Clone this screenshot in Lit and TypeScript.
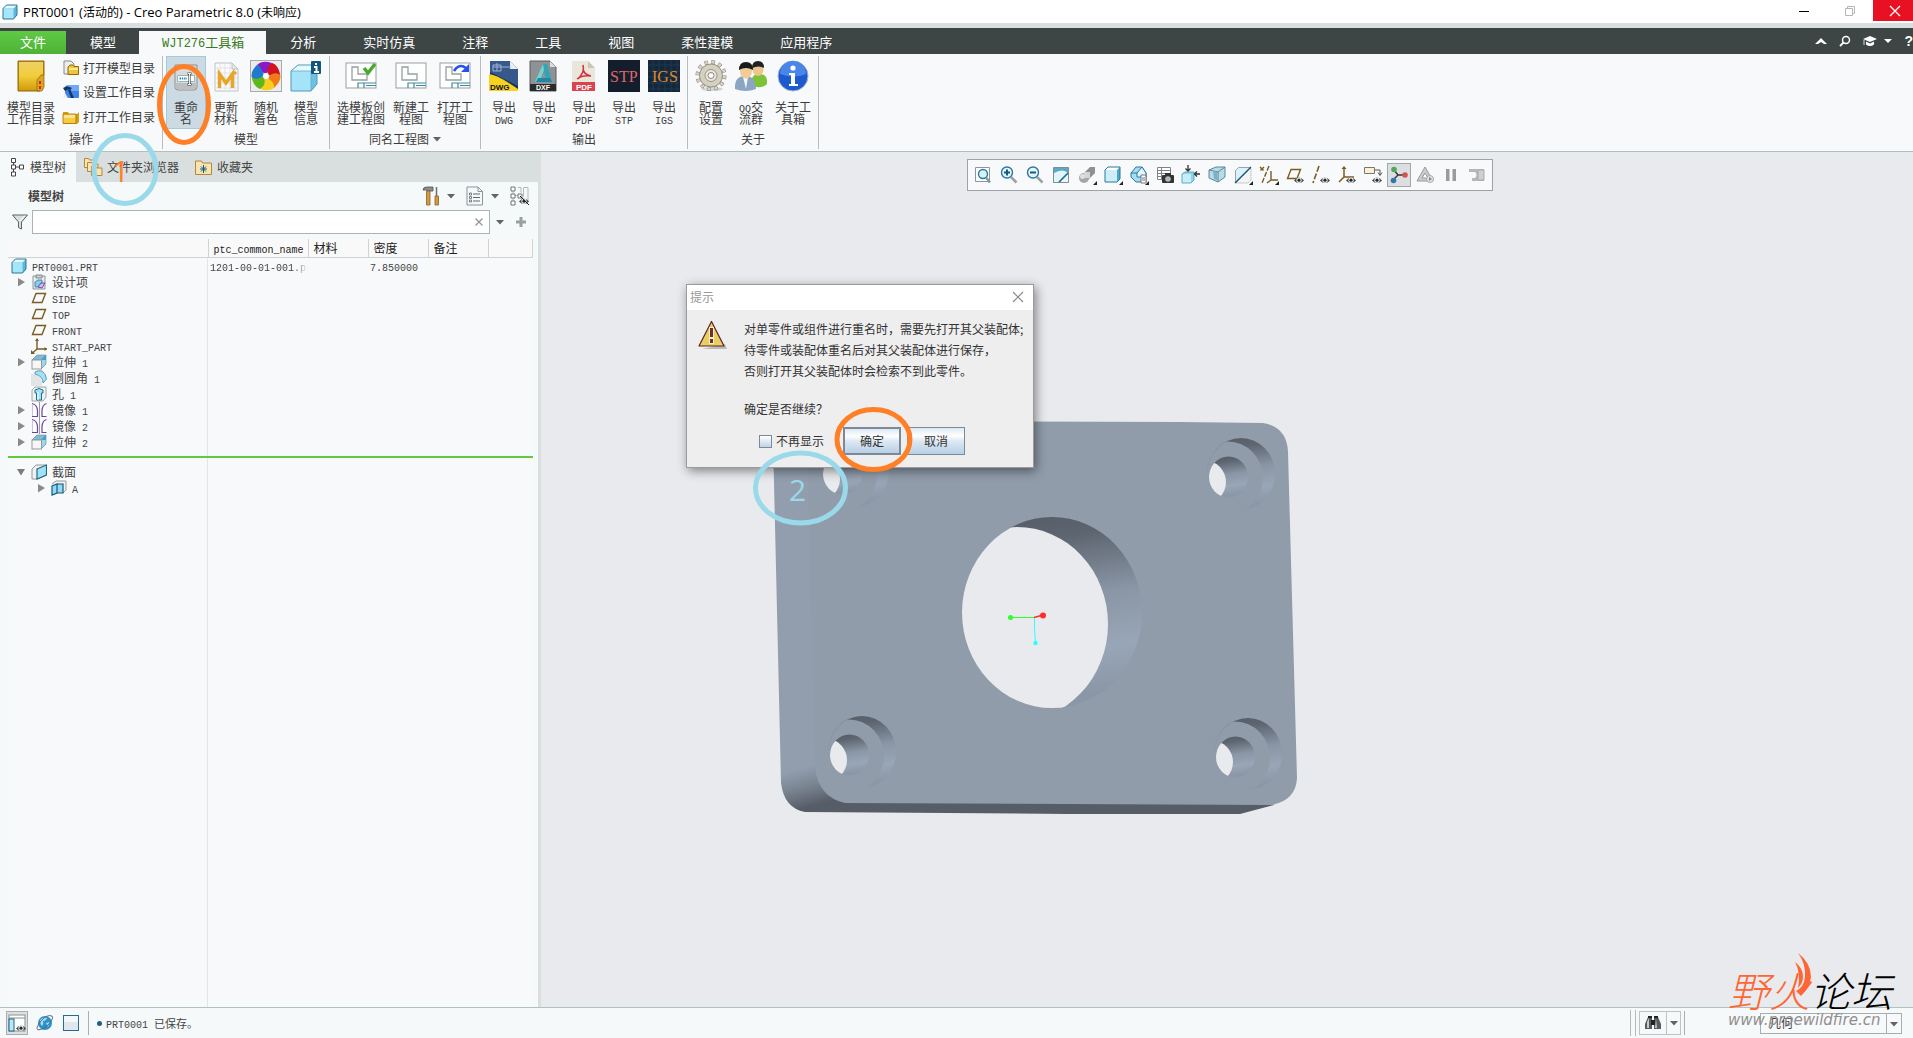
import { LitElement, html, svg, css, nothing, TemplateResult } from "lit";
import { customElement, property } from "lit/decorators.js";
import { classMap } from "lit/directives/class-map.js";

type Art = [w: number, h: number, body: TemplateResult];

const tick = svg`<path d="M20 16v4h-4z" fill="#222"/>`;
const eye = (x: number, y: number) => svg`<g transform="translate(${x} ${y})">
  <path d="M0 3.500Q5 -2.500 10 3.500Q5 8.500 0 3.500z" fill="#3f4446"/><circle cx="5" cy="3.200" r="2.600" fill="#f4f6f7"/><circle cx="5" cy="3.200" r="1.600" fill="#24282a"/></g>`;
const cubeArt = svg`<path d="M1 4.500L4.500 1H15v10L11.500 15H1z" fill="#5fb7d6"/><path d="M1 4.500L4.500 1H15L11.500 4.500z" fill="#e4f7fd"/>
  <path d="M1 4.500h10.500V15H1z" fill="#a5e6fa"/><path d="M1 4.500L4.500 1H15v10L11.500 15H1z" fill="none" stroke="#2a7896"/>`;
const sheet = svg`<rect x="1" y="3" width="30" height="25" fill="#fdfefe" stroke="#9a9fa0"/>
  <path d="M7 7h6v7h9v6H7z" fill="none" stroke="#9a9fa0" stroke-width="1.300"/>
  <path d="M13 28v-5h18M19 23v5M21 25.500h10" fill="none" stroke="#3f8ba1" stroke-width="1.200"/>`;
const extrude = svg`<path d="M1 6L6 1h9v9l-5 5z" fill="#4fa3c6"/><path d="M1 6L6 1h9l-5 5z" fill="#79bdd8" stroke="#7b8d94" stroke-width=".6"/>
  <path d="M15 1v9l-5 5V6z" fill="#9ad8ee" stroke="#5d8798" stroke-width=".6"/><path d="M10.500 6L15 1v5z" fill="#4b9fc2"/><rect x="1" y="6" width="9.500" height="9" fill="#f7f7f7" stroke="#999"/>`;
const mirror = svg`<path d="M8.500 0v16" stroke="#9a9a9a"/><path d="M1 1.500q5 1 5.500 7v6H1M15.500 1.500q-4 1-4.500 7v6h4.500" fill="#fdfcff" stroke="#6a459b" stroke-width="1.200"/><path d="M1.500 2v12" stroke="#ccc4e0"/>`;
const plane = svg`<path d="M5 3.500h9.500L11 12.500H1.500z" fill="none" stroke="#7a5c20" stroke-width="1.400"/>`;
const folder = svg`<path d="M1 4h5l1 2h8l2-2v10l-2 2H1z" fill="#d79f12"/><path d="M1 6h13v9.500H1z" fill="#f4cb45" stroke="#a37308" stroke-width=".8"/><path d="M2 7h11v3H2z" fill="#fbe48d"/>`;
const fbFolder = (x: number, y: number) => svg`<path transform="translate(${x} ${y})" d="M.5 1.500h4l1 1.500h5.500v7.500H.5z" fill="#f9e3b0" stroke="#b3863e"/>`;

const ART: Record<string, Art> = {
  cube: [16, 16, cubeArt],
  modelDir: [32, 32, svg`<path d="M3 1h26v14l-4 4v12H3z" fill="#c98c08"/><path d="M4 2h24v12l-4 4v12H4z" fill="url(#gold)"/>
    <path d="M22 31V20l4-5h3v12l-2 4z" fill="#dba51d" stroke="#96700e" stroke-width=".8"/><path d="M25 21v3M25 26v3" stroke="#e51d12" stroke-width="2"/>
    <path d="M3 1h26v14M3 1v30h22" fill="none" stroke="#8c6a12"/>
    <defs><linearGradient id="gold" x1="0" y1="0" x2="0" y2="1"><stop offset="0" stop-color="#eecf65"/><stop offset=".5" stop-color="#f2cd3a"/><stop offset="1" stop-color="#d39c0b"/></linearGradient></defs>`],
  openModel: [16, 16, svg`<path d="M1 1h7l3 3v10H1z" fill="#eee" stroke="#888"/><path d="M5 7l2-2h3l1 1.500h4.500v8H5z" fill="#f0c53c" stroke="#8e6909"/><path d="M6 8h9v2H6z" fill="#fbe891"/>`],
  setDir: [16, 16, svg`<rect x="2" y="2" width="14" height="12" rx="1" fill="#3f83e8"/><path d="M3 1h13v6H9z" fill="#6ea8f6"/><path d="M0 4q4-3 9 0l-2 2-1-1-4 2zM5 6l2-1 4 9H8z" fill="#16365f"/><path d="M2 9l3 5H0z" fill="#e8f0fb"/>`],
  openDir: [18, 17, folder],
  rename: [32, 32, svg`<path d="M5 5h22v22q0 3-3 3H8q-3 0-3-3z" fill="#d9dadb" stroke="#8f8f8f"/><path d="M5.500 23h21v4q0 2.500-3 2.500H8.500q-3 0-3-2.500z" fill="#bcbfc1"/><path d="M7.500 15.500h17v6h-17z" fill="#fff" stroke="#8fb9c4"/>
    <path d="M9.500 18.500h7.500" stroke="#3d87a5" stroke-width="2" stroke-dasharray="1.500 .8"/><path d="M17.500 13.500h4M17.500 24.500h4M19.500 13.500v11" stroke="#444" stroke-width="2.200"/><path d="M18 13.500h3M18 24.500h3M19.500 13.500v11" stroke="#fff" stroke-width=".9"/>`],
  update: [32, 32, svg`<path d="M5 3h17l6 6v22H5z" fill="#fbfbfb" stroke="#bcc2c6"/><path d="M5 8h22M5 13h23M5 18h23M5 23h23M5 28h23M10 3v28M15 3v28M20 3v28M25 7v24" stroke="#d9dfe2" stroke-width=".8"/>
    <path d="M22 3v6h6z" fill="#e4e8ea" stroke="#bcc2c6"/><path d="M9.500 28V14l6.500 9 6.500-9v14" fill="none" stroke="#e8a52b" stroke-width="3.500"/><circle cx="25" cy="13" r="1.800" fill="#e8a52b"/>`],
  random: [32, 32, svg`<rect x=".5" y=".5" width="31" height="31" fill="#ececec" stroke="#aaa"/>
    ${["#8a1bc4", "#d21320", "#f27a18", "#f6cf22", "#5cb81d", "#1f79cf"].map((c, i) => svg`<path transform="rotate(${i * 60} 16 16)" d="M16 14Q7 11 8 4Q13 0 22 3Q20 9 16 14z" fill=${c}/>`)}
    <circle cx="16" cy="16" r="3" fill="#fff"/>`],
  info: [32, 32, svg`<path d="M1 11l7-6h19v19l-6 7H1z" fill="#6fc0de"/><path d="M1 11l7-6h19l-6 6z" fill="#e8f8fd"/><path d="M1 11h20v20H1z" fill="#a5e3f8"/><path d="M1 11l7-6h19v19l-6 7H1z" fill="none" stroke="#4a9dbb"/>
    <path d="M1 11h20v20" fill="none" stroke="#5aaecb" stroke-width=".8"/><rect x="21" y="1" width="10" height="13" rx="1" fill="#12577a"/><path d="M26 3v2M24 7h2.500v5M24 12h5" stroke="#fff" stroke-width="2" fill="none"/>`],
  sheetNew: [32, 32, sheet],
  sheetTpl: [32, 32, svg`${sheet}<path d="M19 8l4 5 7-9" fill="none" stroke="#4aa82c" stroke-width="3.500"/>`],
  sheetOpen: [32, 32, svg`${sheet}<path d="M15 11q5-8 12-3" fill="none" stroke="#2850ec" stroke-width="2.500"/><path d="M30 4v8h-8z" fill="#2850ec"/>`],
  dwg: [32, 32, svg`<path d="M2 1h20l8 8v22H2z" fill="#36588b"/><path d="M2 12L30 26v5H2z" fill="#173257"/><path d="M1 14q9 1 29 15v2H1z" fill="#f8d21c"/><path d="M22 1v8h8z" fill="#e9eef5"/>
    <path d="M5 7h18M9 3v8M5 5h8v6H5z" fill="none" stroke="#9bb4d8"/><text x="2" y="30" font-family="Liberation Sans" font-size="8" font-weight="700" fill="#111">DWG</text>`],
  dxf: [32, 32, svg`<path d="M2 1h20l6 6v24H2z" fill="#8f9294" stroke="#5a5c5e"/><path d="M22 1v6h6z" fill="#dadcdd"/><path d="M7 22L15 4h4l5 18h-5l-3-11-4 11z" fill="#34a4b4"/><path d="M7 22l5-1 4-11-1-6z" fill="#79d3ca"/><path d="M10 18h12l2 4H8z" fill="#1f86a6"/>
    <path d="M2 24h26v7H2z" fill="#2a2b2c"/><text x="8" y="30" font-family="Liberation Sans" font-size="7" font-weight="700" fill="#fff">DXF</text>`],
  pdf: [32, 32, svg`<path d="M4 1h16l7 7v23H4z" fill="#e9e7dc"/><path d="M20 1v7h7z" fill="#c9c6b8"/><path d="M15 5q2 7-5 14M15 9q1 6 8 7-9-1-14 3" fill="none" stroke="#d4333d" stroke-width="1.600"/><path d="M4 22h23v9H4z" fill="#d8434d"/>
    <text x="8" y="30" font-family="Liberation Sans" font-size="8" font-weight="700" fill="#fff">PDF</text>`],
  stp: [32, 32, svg`<rect width="32" height="32" fill="#131d2b"/><text x="2" y="22" font-family="Liberation Serif" font-size="16" fill="#e0666a">STP</text>`],
  igs: [32, 32, svg`<rect width="32" height="32" fill="#15273a"/><path d="M0 5h32M0 11h32M0 17h32M0 23h32M0 29h32M5 0v32M11 0v32M17 0v32M23 0v32M29 0v32" stroke="#1f3c56" stroke-width=".8"/><text x="4" y="22" font-family="Liberation Serif" font-size="16" fill="#e08a25">IGS</text>`],
  gear: [32, 32, svg`<ellipse cx="17" cy="29" rx="11" ry="2" fill="#d5d5d5"/><circle cx="16" cy="15.500" r="13.500" fill="none" stroke="#8d8878" stroke-width="4" stroke-dasharray="3.500 3.568"/><circle cx="16" cy="15.500" r="13.500" fill="none" stroke="#d8d4c6" stroke-width="3" stroke-dasharray="2.500 4.568" stroke-dashoffset="-.5"/>
    <circle cx="16" cy="15.500" r="11.500" fill="#d5d1c2" stroke="#97917f"/><circle cx="16" cy="15.500" r="6" fill="#e9e6dc" stroke="#9b9584"/><circle cx="16" cy="15.500" r="3" fill="#fff" stroke="#8c8675"/>`],
  people: [32, 32, svg`<path d="M16 26q-1-12 8-12t8 10q-4 5-16 2z" fill="#7cc436"/><ellipse cx="23" cy="9" rx="5.500" ry="7" fill="#eec48d"/><path d="M17 8q0-7 6-7t6 7q-5-3-12 0z" fill="#222"/>
    <path d="M0 29q-1-13 10-13t11 13q-10 4-21 0z" fill="#8ca5c0"/><path d="M8 17l3 12 2-12z" fill="#f3f6fa"/><ellipse cx="11" cy="11" rx="6" ry="7.500" fill="#f3cb96"/><path d="M4 10q0-8 7-8t7 8q-7-4-14 0z" fill="#191919"/>`],
  about: [32, 32, svg`<circle cx="16" cy="16" r="15" fill="#1d59cf" stroke="#9db3d4"/><path d="M3 14a13 13 0 0 1 26 0q-12 5-26 0z" fill="#4a86ea"/><circle cx="16" cy="8" r="2.600" fill="#fff"/><path d="M12 13h6v11h3v2h-9v-2h2v-9h-2z" fill="#fff"/>`],
  treeTab: [16, 20, svg`<path d="M3.500 5v10M4 10h6" stroke="#444" fill="none"/><path d="M1.500 1.500h4v4h-4zM1.500 8h4v4h-4zM1.500 15h4v4h-4zM9.500 8h4v4h-4z" fill="#fff" stroke="#444"/>`],
  folders: [19, 20, svg`${fbFolder(0, 0)}${fbFolder(3, 4)}${fbFolder(7, 8)}`],
  favs: [18, 16, svg`<path d="M.5 2h6l1 2h9v11.500H.5z" fill="#f9e3b0" stroke="#b3863e"/><path d="M8.500 6v8M5 10h7M6 7.500l5 5M11 7.500l-5 5" stroke="#1c5c7c"/>`],
  tools: [18, 20, svg`<path d="M1 4q0-3 4-3h6v4H8L4 4z" fill="#8a8f92" stroke="#4d5052" stroke-width=".8"/><path d="M4.500 5h3.500v14H4.500z" fill="#d19a4a" stroke="#8d5f1d" stroke-width=".8"/><path d="M14.500 1v9" stroke="#6d7173" stroke-width="1.500"/><path d="M13 10h3.500v9H13z" fill="#d19a4a" stroke="#8d5f1d" stroke-width=".8"/>`],
  list: [18, 20, svg`<path d="M1 1h11l4.500 4.500V19H1z" fill="#f4f8f9" stroke="#87979c"/><path d="M12 1v4.500h4.500" fill="none" stroke="#87979c"/><path d="M7 8h7M7 11.500h7M7 15h7" stroke="#5d6a6e"/><path d="M3.500 7h2v2h-2zM3.500 10.500h2v2h-2zM3.500 14h2v2h-2z" fill="none" stroke="#5d6a6e" stroke-width=".8"/>`],
  treeEye: [20, 20, svg`<path d="M3 5v10M4 9.500h6M8 1.500h3v5M14 1.500h4v14M13.500 1.500v9" stroke="#b3babc" fill="none"/><path d="M1 1h4v4H1zM1 8h4v4H1zM1 15h4v4H1zM8 8h4v4H8z" fill="#fff" stroke="#6f7779"/>${eye(9, 12)}<path d="M10 10l9 9" stroke="#222"/>`],
  funnel: [16, 16, svg`<path d="M.5 1h15L9.500 8v7l-3-1.500V8z" fill="#d9dfe0" stroke="#5c6466"/><path d="M8 7l5-5.500" stroke="#fff"/>`],
  cross: [10, 10, svg`<path d="M1.500 1.500l7 7M8.500 1.500l-7 7" stroke="#8e9698" stroke-width="1.200"/>`],
  plus: [12, 12, svg`<path d="M6 1v10M1 6h10" stroke="#9a9fa1" stroke-width="3"/>`],
  down: [8, 8, svg`<path d="M0 2h8L4 6.500z" fill="#5f6466"/>`],
  right: [8, 10, svg`<path d="M1 1l7 4-7 4.500z" fill="#8a8a8a"/>`],
  open: [10, 8, svg`<path d="M1 1h8L5 7.500z" fill="#7c7c7c"/>`],
  design: [16, 16, svg`<path d="M2 2h12v13H2z" fill="#e8ecef" stroke="#8c9499"/><path d="M5 1h6v3H5z" fill="#c9ced1" stroke="#82898d"/><path d="M4 8l3-2h4v4l-2 3H4z" fill="#82cfe8" stroke="#30799a" stroke-width=".8"/><path d="M7 13l3-4h4l-3 5z" fill="#cdbce8" stroke="#6f4aa8"/>`],
  plane: [16, 16, plane],
  csys: [16, 16, svg`<path d="M6 1v10h10M6 11l-4.500 4" fill="none" stroke="#7a5c20" stroke-width="1.400"/><path d="M4 3l2-3 2 3zM13.500 9l2.500 2-2.500 2zM0 12v4h4z" fill="#7a5c20"/>`],
  extrude: [16, 16, extrude],
  round: [16, 16, svg`<path d="M0 4h4q7 2 7 12H0z" fill="#e3e4e5"/><path d="M4 2q3-2 7-1 4 3 4.500 8L12 13q0-7-8-9z" fill="#a6e0f4" stroke="#3b8cab" stroke-width=".8"/>`],
  hole: [16, 16, svg`<path d="M1 4l3-3h11v10l-3 4H1z" fill="#f0f1f1" stroke="#8d9496" stroke-width=".8"/><path d="M4 4q4-3 8 0v3h-1.500v7h-5V7H4z" fill="#a3e2f5" stroke="#21708f"/><path d="M7 6v8" stroke="#fff"/>`],
  mirror: [16, 16, mirror],
  section: [16, 16, svg`<path d="M1 5l4-4h10v10l-9 4H1z" fill="#f0f0f0" stroke="#999"/><path d="M6 5l9.500-4v10L6 15z" fill="#a3e2f5" stroke="#1d6b8a" stroke-width="1.200"/>`],
  sectionA: [16, 16, svg`<path d="M1 4l4-3h10v9l-3 3" fill="#f0f0f0" stroke="#999"/><path d="M1 6l5-2v9l-5 2zM6 4h6v9H6z" fill="#93dbf2" stroke="#14597a" stroke-width="1.200"/>`],
  navPane: [18, 18, svg`<rect x="1" y="1" width="16" height="16" fill="#fff" stroke="#8a9092"/><path d="M1 4h16" stroke="#8a9092"/><rect x="1" y="5" width="5" height="12" fill="#bfe6f4" stroke="#1d6483"/>${eye(8, 11)}`],
  globe: [18, 18, svg`<circle cx="9" cy="9" r="7" fill="#2b93cc"/><path d="M4 6q4-4 7-2-1 3-4 3 1 3-1 5-2-2-2-6zM10 9l4-1-2 5z" fill="#a9dcf2"/><path d="M2 16Q-1 14 5 7T16 2q2 2-3 8T2 16z" fill="none" stroke="#51606a" stroke-width=".9"/>`],
  square: [18, 18, svg`<rect x="1.500" y="1.500" width="15" height="15" fill="#dfe8ee" stroke="#2a6b89"/><path d="M2 2h14v6H2z" fill="#f3f7f9"/>`],
  bino: [18, 18, svg`<path d="M4 3h4v12H1v-5zM10 3h4l3 7v5h-7z" fill="#555b5e"/><path d="M7 6h4v5H7z" fill="#222"/><path d="M3 8l2-4v10H3zM12 5l1 9h-2z" fill="#c5cacc"/><path d="M4 2h4v2H4zM10 2h4v2h-4z" fill="#222"/>`],
  warn: [32, 32, svg`<path d="M5 30h25l-2-5z" fill="#bbb"/><path d="M14.500 2.500L27 27H2z" fill="#e8cf5f" stroke="#5f1f2a" stroke-width="1.200" stroke-linejoin="round"/><path d="M12 8h5v17h-5z" fill="#fdf3b8"/><path d="M13 9h3v9h-3zM13 20h3v4h-3z" fill="#742b3a"/>`],
  close: [12, 12, svg`<path d="M1 1l10 10M11 1L1 11" stroke="#8a8a8a" stroke-width="1.200"/>`],
  winMin: [12, 12, svg`<path d="M1 6.500h10" stroke="#000"/>`],
  winMax: [12, 12, svg`<path d="M1.500 3.500h7v7h-7zM3.500 3.500v-2h7v7h-2" fill="none" stroke="#b5b5b5"/>`],
  winClose: [12, 12, svg`<path d="M1 1l10 10M11 1L1 11" stroke="#fff" stroke-width="1.300"/>`],
  up: [12, 8, svg`<path d="M0 7l6-6 6 6-3 0-3-2-3 2z" fill="#fff"/>`],
  search: [12, 12, svg`<circle cx="7" cy="5" r="3.500" fill="none" stroke="#fff" stroke-width="1.500"/><path d="M4.500 7.500L1 11" stroke="#fff" stroke-width="1.800"/>`],
  hat: [14, 12, svg`<path d="M0 4l7-3 7 3-7 3z" fill="#fff"/><path d="M3 6.500l4 2 4-2v3q-4 3-8 0z" fill="#fff"/><path d="M1 5v5" stroke="#fff" stroke-width=".8"/>`],
  downW: [8, 6, svg`<path d="M0 1h8L4 5z" fill="#fff"/>`],
  vRefit: [20, 20, svg`<path d="M2.500 2.500h14v14h-14z" fill="#fff" stroke="#8d9698"/><circle cx="10" cy="9" r="4.500" fill="#d9f1fb" stroke="#2878a0" stroke-width="1.400"/><path d="M13 12.500l4 5" stroke="#8d9698" stroke-width="2.500"/>`],
  vIn: [20, 20, svg`<circle cx="8" cy="7.500" r="5.500" fill="#e6f5fb" stroke="#2878a0" stroke-width="1.400"/><path d="M8 4.500v6M5 7.500h6" stroke="#15597c" stroke-width="2"/><path d="M12 12l5.500 5.500" stroke="#9aa2a4" stroke-width="2.500"/>`],
  vOut: [20, 20, svg`<circle cx="8" cy="7.500" r="5.500" fill="#e6f5fb" stroke="#2878a0" stroke-width="1.400"/><path d="M5 7.500h6" stroke="#15597c" stroke-width="2"/><path d="M12 12l5.500 5.500" stroke="#9aa2a4" stroke-width="2.500"/>`],
  vRepaint: [20, 20, svg`<path d="M2.500 2.500h15v15h-15z" fill="#5aa9c8" stroke="#838c8f"/><path d="M3 8q9-5 14 0L8 17H3z" fill="#e3f5fb"/><path d="M9 17l8-8v8z" fill="#eaf6fa"/><path d="M17 8L8 17" stroke="#1f6f93" stroke-width="1.600"/>`],
  vShade: [20, 20, svg`<circle cx="7" cy="13" r="5" fill="#a4a6a7"/><path d="M7 8l6-6h5v6l-6 6z" fill="#8e9091"/><path d="M7 7h6v6H7z" fill="#d4d5d6"/><circle cx="5.500" cy="11.500" r="2.500" fill="#dedfdf"/>${tick}`],
  vCube: [20, 20, svg`<path d="M2 5l3-3h12v12l-3 3H2z" fill="#4fa9cb"/><path d="M2 5l3-3h12l-3 3z" fill="#fff"/><path d="M2 5h12v12H2z" fill="#cdeef9"/><path d="M2 5l3-3h12v12l-3 3H2z" fill="none" stroke="#2a7896"/>${tick}`],
  vPersp: [20, 20, svg`<path d="M2 8l5-6h6l4 6v9H7l-5-5z" fill="#a5def2" stroke="#2878a0"/><path d="M2 8h6l5-6 4 6v4H8V8" fill="#e3f6fc" stroke="#2878a0"/><path d="M12 10h5v8h-5z" fill="#fff" stroke="#777"/><path d="M13 13h3M13 15h3" stroke="#777"/>${tick}`],
  vShot: [20, 20, svg`<path d="M2.500 2.500h13v12h-13zM2.500 5.500h13M2.500 8.500h13M2.500 11.500h13M6.500 2.500v12" fill="#fff" stroke="#7d8486"/><rect x="7" y="10" width="12" height="8" rx="1" fill="#333"/><circle cx="13" cy="14" r="2.800" fill="#b5b9bb"/><path d="M10 8h6v2h-6z" fill="#333"/>`],
  vBox: [20, 20, svg`<path d="M1 9l3-2h9v8l-3 3H1z" fill="#8ed3ea"/><path d="M1 9h9v9H1z" fill="#c9edf8"/><path d="M1 9l3-2h9v8l-3 3H1z" fill="none" stroke="#5aaecb"/><path d="M7 0v5M4.500 3.500L7 6l2.500-2.500M19 9h-5M16 6.500L13.500 9l2.500 2.500" stroke="#333" stroke-width="1.300" fill="none"/>`],
  vSect: [20, 20, svg`<path d="M2 5l7-3h9v10l-7 5-9-4z" fill="#b9dbe8" stroke="#5e8798"/><path d="M2 5l9 2v10M11 7l7-5" fill="none" stroke="#5e8798"/><path d="M6 6l1 8 3 1V7z" fill="#7fb1c6"/>`],
  vClip: [20, 20, svg`<path d="M2.500 17.500v-12l3-3h12v12l-3 3z" fill="#dcf2fa" stroke="#9aa2a4"/><path d="M3 18L18 3v12l-3 3z" fill="#f4f4f4" stroke="#9aa2a4" stroke-dasharray="1 1"/><path d="M2 18L18 2" stroke="#14597a" stroke-width="1.300"/>${tick}`],
  vDatum: [20, 20, svg`<path d="M1 2l4 4M5 2L1 6M10 1L3 18" stroke="#7a5c20" stroke-width="1.400" stroke-dasharray="5 1.500"/><path d="M12 6v9h7M12 15l-4 3" fill="none" stroke="#7a5c20" stroke-width="1.400"/>${tick}`],
  vPlane: [20, 20, svg`<g transform="translate(1 1)">${plane}</g>${eye(9, 12)}`],
  vAxis: [20, 20, svg`<path d="M8 1L2 18" stroke="#7a5c20" stroke-width="1.600" stroke-dasharray="6 2"/>${eye(9, 12)}`],
  vCsys: [20, 20, svg`<path d="M7 2v10h10M7 12l-5 5" fill="none" stroke="#7a5c20" stroke-width="1.500"/><path d="M4.500 4L7 1l2.500 3z" fill="#7a5c20"/>${eye(9, 12)}`],
  vNote: [20, 20, svg`<path d="M1.500 2.500h10v6h-10z" fill="#fbf0cf" stroke="#777"/><path d="M12 5h5v5M15 7.500l2 3 2-3" fill="none" stroke="#555"/>${eye(9, 12)}`],
  vSpin: [20, 20, svg`<path d="M5 5l4 5h7M9 10l-5 5" stroke="#333" stroke-width="1.400" fill="none"/><circle cx="5" cy="4.500" r="2.800" fill="#4caa57"/><circle cx="16" cy="10" r="2.800" fill="#d65252"/><circle cx="4.500" cy="15.500" r="2.800" fill="#3278ab"/>`],
  vSim: [20, 20, svg`<path d="M10 2l8 14H2z" fill="#ccc" stroke="#999"/><path d="M10 8l3 5H7z" fill="#fff" stroke="#999"/><circle cx="15" cy="14" r="3.500" fill="#e3e3e3" stroke="#aaa"/><path d="M14 12l3 2-3 2z" fill="#888"/>`],
  vPause: [20, 20, svg`<path d="M5 4h3.500v12H5zM11.500 4H15v12h-3.500z" fill="#9b9b9b"/>`],
  vEnd: [20, 20, svg`<path d="M2 4h15v12H5v-3h3q3-3 0-6H2z" fill="#b7b7b7"/><path d="M11 5h6v10h-6z" fill="#cfcfcf" stroke="#aaa"/>`],
};

const icon = (name: string) => {
  const [w, h, body] = ART[name];
  return html`<svg width=${w} height=${h} viewBox="0 0 ${w} ${h}" aria-hidden="true">${body}</svg>`;
};

/* Half-width characters are set in a fixed pitch next to full-width ones. */
const mixed = (s: string) =>
  s.split(/([\x20-\x7e]+)/).filter(Boolean).map((p) => (/^[\x20-\x7e]/.test(p) ? html`<span class="mono">${p}</span>` : p));

const base = css`
  * { box-sizing: border-box; }
  svg { display: block; flex: none; }
  button { font: inherit; color: inherit; background: none; border: 0; padding: 0; margin: 0; }
  .mono { font-family: "Liberation Mono", monospace; font-size: 10px; line-height: 0; white-space: pre; }
`;

@customElement("title-bar")
class TitleBar extends LitElement {
  static styles = [base, css`
    :host { display: flex; align-items: center; height: 23px; background: #fff; padding-left: 2px; gap: 5px; }
    h1 { margin: 0; flex: 1; font: 400 13px/22px "Open Sans", "Noto Sans CJK SC", sans-serif; color: #000; }
    h1 .han { font-size: 12px; line-height: 0; }
    .win { align-self: start; display: flex; }
    .win button { width: 46px; height: 21px; display: grid; place-items: center; }
    .win .shut { width: 40px; background: #e81123; }
    .win .shut svg { margin-left: 4px; }
  `];
  render() {
    return html`${icon("cube")}<h1>PRT0001 (<span class="han">活动的</span>) - Creo Parametric 8.0 (<span class="han">未响应</span>)</h1>
      <div class="win">
        <button aria-label="最小化">${icon("winMin")}</button>
        <button aria-label="还原">${icon("winMax")}</button>
        <button class="shut" aria-label="关闭">${icon("winClose")}</button>
      </div>`;
  }
}

@customElement("tab-strip")
class TabStrip extends LitElement {
  static styles = [base, css`
    :host { display: flex; align-items: flex-end; height: 31px; background: #3d4545; border-top: 5px solid #d9dfde; }
    nav { display: flex; flex: 1; }
    a { height: 23px; padding: 0 23px 0 24px; font-size: 13px; line-height: 22px; color: #fff; text-decoration: none; white-space: nowrap; }
    .file { padding: 0 20px; background: linear-gradient(#5ecb43, #4fb137); }
    .on { padding: 0 22px 0 23px; background: #f8f9fb; color: #3a7b1c; }
    .on .mono { font-size: 12px; }
    .side { display: flex; align-items: center; height: 26px; gap: 12px; color: #fff; }
    .side button { display: grid; place-items: center; }
    .side .help { font: 700 14px/20px "Liberation Sans", sans-serif; }
    .pair { display: flex; gap: 7px; }
  `];
  render() {
    const tabs = ["文件", "模型", "WJT276工具箱", "分析", "实时仿真", "注释", "工具", "视图", "柔性建模", "应用程序"];
    return html`<nav>${tabs.map((t, i) => html`<a href="#" class=${classMap({ file: i === 0, on: i === 2 })}>${mixed(t)}</a>`)}</nav>
      <div class="side">
        <button aria-label="折叠功能区">${icon("up")}</button><button aria-label="搜索">${icon("search")}</button>
        <div class="pair"><button aria-label="学习">${icon("hat")}</button><button aria-label="更多">${icon("downW")}</button></div>
        <button class="help">?</button>
      </div>`;
  }
}

type Tool = { art: string; l1: string; l2: string; wide?: string; on?: boolean };
const GROUPS: { label: string; menu?: boolean; small?: [string, string][]; tools: Tool[] }[] = [
  { label: "操作", small: [["openModel", "打开模型目录"], ["setDir", "设置工作目录"], ["openDir", "打开工作目录"]],
    tools: [{ art: "modelDir", l1: "模型目录", l2: "工作目录", wide: "w3" }] },
  { label: "模型", tools: [{ art: "rename", l1: "重命", l2: "名", on: true }, { art: "update", l1: "更新", l2: "材料" }, { art: "random", l1: "随机", l2: "着色" }, { art: "info", l1: "模型", l2: "信息" }] },
  { label: "同名工程图", menu: true, tools: [{ art: "sheetTpl", l1: "选模板创", l2: "建工程图", wide: "w3" }, { art: "sheetNew", l1: "新建工", l2: "程图", wide: "w2" }, { art: "sheetOpen", l1: "打开工", l2: "程图", wide: "w2" }] },
  { label: "输出", tools: [{ art: "dwg", l1: "导出", l2: "DWG" }, { art: "dxf", l1: "导出", l2: "DXF" }, { art: "pdf", l1: "导出", l2: "PDF" }, { art: "stp", l1: "导出", l2: "STP" }, { art: "igs", l1: "导出", l2: "IGS" }] },
  { label: "关于", tools: [{ art: "gear", l1: "配置", l2: "设置" }, { art: "people", l1: "QQ交", l2: "流群" }, { art: "about", l1: "关于工", l2: "具箱", wide: "w2" }] },
];

@customElement("ribbon-bar")
class RibbonBar extends LitElement {
  static styles = [base, css`
    :host { display: flex; height: 98px; background: #f8f9fb; border-bottom: 1px solid #afbfbf; color: #3c3c3c; }
    section { display: flex; flex-direction: column; margin: 2px 0; padding: 0 3px; border-right: 1px solid #b7bdbf; }
    .tools { display: flex; height: 75px; }
    .tool { display: flex; flex-direction: column; align-items: center; width: 40px; height: 73px; padding-top: 4px; line-height: 12px; white-space: nowrap; }
    .tool svg { margin-bottom: 9px; }
    .w2 { width: 44px; }
    .w3 { width: 56px; }
    .on { background: #ccdbe3; box-shadow: inset 0 0 0 1px #a2cbe0; }
    .small { display: flex; flex-direction: column; justify-content: space-around; padding: 0 4px 0 3px; }
    .small button { display: flex; align-items: center; gap: 4px; line-height: 16px; }
    .small span { display: grid; place-items: center; width: 17px; overflow: hidden; }
    .label { display: flex; justify-content: center; align-items: center; gap: 4px; line-height: 20px; }
  `];
  render() {
    return GROUPS.map((g) => html`<section>
      <div class="tools">
        ${g.tools.map((t) => html`<button class=${classMap({ tool: true, on: !!t.on, [t.wide ?? "w1"]: true })}>${icon(t.art)}<span>${mixed(t.l1)}</span><span>${mixed(t.l2)}</span></button>`)}
        ${g.small ? html`<div class="small">${g.small.map(([a, l]) => html`<button><span>${icon(a)}</span>${l}</button>`)}</div>` : nothing}
      </div>
      <div class="label">${g.label}${g.menu ? icon("down") : nothing}</div>
    </section>`);
  }
}

type Row = { depth: number; art: string; text: string; arrow?: "right" | "open"; cells?: string[] };
const ROWS: Row[] = [
  { depth: 0, art: "cube", text: "PRT0001.PRT", cells: ["1201-00-01-001.prt", "", "7.850000", "", ""] },
  { depth: 1, art: "design", text: "设计项", arrow: "right" },
  { depth: 1, art: "plane", text: "SIDE" },
  { depth: 1, art: "plane", text: "TOP" },
  { depth: 1, art: "plane", text: "FRONT" },
  { depth: 1, art: "csys", text: "START_PART" },
  { depth: 1, art: "extrude", text: "拉伸 1", arrow: "right" },
  { depth: 1, art: "round", text: "倒圆角 1" },
  { depth: 1, art: "hole", text: "孔 1" },
  { depth: 1, art: "mirror", text: "镜像 1", arrow: "right" },
  { depth: 1, art: "mirror", text: "镜像 2", arrow: "right" },
  { depth: 1, art: "extrude", text: "拉伸 2", arrow: "right" },
];
const SECTIONS: Row[] = [
  { depth: 1, art: "section", text: "截面", arrow: "open" },
  { depth: 2, art: "sectionA", text: "A", arrow: "right" },
];

@customElement("model-tree")
class ModelTree extends LitElement {
  static styles = [base, css`
    :host { display: flex; flex-direction: column; width: 541px; flex: none; background: #f5f9fa; border-right: 3px solid #d9dfde; color: #444; }
    nav { display: flex; height: 30px; background: #d9dfde; margin-right: -3px; }
    nav a { display: flex; align-items: center; gap: 4px; padding: 0 8px; color: #444; text-decoration: none; }
    nav .on { background: #f5f9fa; padding: 0 10px; }
    .head { display: flex; align-items: center; gap: 11px; height: 28px; padding: 0 8px 0 28px; }
    .head .pair { display: flex; gap: 7px; }
    h2 { margin: 0; flex: 1; font-size: 12px; line-height: 16px; font-weight: 700; }
    .filter { display: flex; align-items: center; gap: 4px; padding: 0 11px 0 12px; }
    .box { display: flex; align-items: center; flex: 1; height: 24px; padding-right: 5px; background: #fff; border: 1px solid #a9b5b5; }
    .box input { flex: 1; min-width: 0; height: 20px; border: 0; outline: 0; background: none; font: inherit; }
    .more { display: flex; gap: 11px; margin-left: 2px; }
    .more button, .head button { display: grid; place-items: center; }
    .grid { flex: 1; margin: 5px 5px 0 8px; background: linear-gradient(#e3e6e8, #e3e6e8) 199px 0 / 1px 100% no-repeat #f8f9fb; }
    table { width: 100%; table-layout: fixed; border-collapse: collapse; }
    .c0 { width: 200px; } .c1 { width: 100px; } .c2 { width: 60px; }
    th { height: 18px; padding: 0 0 0 5px; text-align: left; font-weight: 400; line-height: 16px; color: #222; background: #f9f9f9; border-right: 1px solid #d0d3d4; border-bottom: 1px solid #d0d3d4; white-space: nowrap; }
    td { height: 16px; padding: 0 0 0 2px; line-height: 16px; overflow: hidden; white-space: nowrap; }
    td:first-child { padding-left: 3px; }
    .fade { -webkit-mask-image: linear-gradient(90deg, #000 85%, transparent); mask-image: linear-gradient(90deg, #000 85%, transparent); }
    .cell { display: flex; align-items: center; gap: 5px; height: 16px; }
    .d1 { padding-left: 5px; } .d2 { padding-left: 25px; }
    .cell .arrow { display: grid; place-items: center; width: 10px; }
    .cut td { height: 14px; padding: 0; }
    .cut hr { margin: 0; border: 0; height: 2px; background: #62c742; }
  `];
  row(r: Row) {
    return html`<tr>
      <td><div class="cell d${r.depth}">${r.depth ? html`<span class="arrow">${r.arrow ? icon(r.arrow) : nothing}</span>` : nothing}${icon(r.art)}<span>${mixed(r.text)}</span></div></td>
      ${(r.cells ?? ["", "", "", "", ""]).map((c, i) => html`<td class=${i === 0 && c ? "fade" : ""}>${mixed(c)}</td>`)}
    </tr>`;
  }
  render() {
    return html`
      <nav><a class="on" href="#">${icon("treeTab")}模型树</a><a href="#">${icon("folders")}文件夹浏览器</a><a href="#">${icon("favs")}收藏夹</a></nav>
      <div class="head"><h2>模型树</h2>
        <div class="pair"><button aria-label="设置">${icon("tools")}</button><button aria-label="设置菜单">${icon("down")}</button></div>
        <div class="pair"><button aria-label="显示">${icon("list")}</button><button aria-label="显示菜单">${icon("down")}</button></div>
        <button aria-label="隐藏列">${icon("treeEye")}</button></div>
      <div class="filter">${icon("funnel")}
        <div class="box"><input type="text" aria-label="过滤"><button aria-label="清除">${icon("cross")}</button></div>
        <div class="more"><button aria-label="过滤菜单">${icon("down")}</button><button aria-label="添加">${icon("plus")}</button></div></div>
      <div class="grid"><table>
        <colgroup><col class="c0"><col class="c1"><col class="c2"><col class="c2"><col class="c2"><col></colgroup>
        <thead><tr>${["", "ptc_common_name", "材料", "密度", "备注", ""].map((h) => html`<th>${mixed(h)}</th>`)}</tr></thead>
        <tbody>${ROWS.map((r) => this.row(r))}
          <tr class="cut"><td colspan="6"><hr></td></tr>
          ${SECTIONS.map((r) => this.row(r))}</tbody>
      </table></div>`;
  }
}

const VIEW_TOOLS: [string, string][] = [
  ["vRefit", "重新调整"], ["vIn", "放大"], ["vOut", "缩小"], ["vRepaint", "重画"], ["vShade", "渲染选项"], ["vCube", "显示样式"], ["vPersp", "已保存方向"],
  ["vShot", "视图管理器"], ["vBox", "视图法向"], ["vSect", "透视图"], ["vClip", "截面"], ["vDatum", "基准显示"], ["vPlane", "平面显示"], ["vAxis", "轴显示"],
  ["vCsys", "坐标系显示"], ["vNote", "注释显示"], ["vSpin", "旋转中心"], ["vSim", "模拟"], ["vPause", "暂停"], ["vEnd", "结束"],
];

@customElement("model-view")
class ModelView extends LitElement {
  static styles = [base, css`
    :host { display: block; flex: 1; min-width: 0; position: relative; overflow: hidden; background: #e9eaee; }
    .scene { position: absolute; inset: 0; width: 100%; height: 100%; }
    .bar { position: relative; display: flex; width: fit-content; margin: 7px auto 0; padding: 3px 2px; background: #f8f9fb; border: 1px solid #9fa3a5; left: 3px; }
    .bar button { display: grid; place-items: center; width: 24px; height: 24px; margin: 0 1px; border: 1px solid transparent; }
    .bar .on { background: #dcdee1; border-color: #a4a7a9; }
  `];
  bolt(dx: number, dy: number, i: number) {
    return svg`<g transform="translate(${dx} ${dy})">
      <clipPath id="cb${i}"><ellipse cx="1241" cy="474" rx="34" ry="36"/></clipPath>
      <clipPath id="ch${i}"><ellipse cx="1228.500" cy="477" rx="19.500" ry="20.500"/></clipPath>
      <ellipse cx="1241" cy="474" rx="34" ry="36" fill="url(#bore)"/>
      <ellipse cx="1228" cy="478" rx="35" ry="36.500" fill="#909caa" clip-path="url(#cb${i})"/>
      <path d="M1226 441Q1196 446 1206 480Q1212 506 1246 510L1222 516L1196 490L1200 440z" fill="#909caa"/>
      <ellipse cx="1228.500" cy="477" rx="19.500" ry="20.500" fill="url(#bore)"/>
      <ellipse cx="1206" cy="482" rx="20" ry="21" fill="#e9eaee" clip-path="url(#ch${i})"/></g>`;
  }
  render() {
    return html`<svg class="scene" role="img" aria-label="PRT0001">
      <defs>
        <linearGradient id="bore" x1="0" y1="0" x2=".15" y2="1"><stop offset="0" stop-color="#545b65"/><stop offset=".18" stop-color="#5d6570"/><stop offset=".5" stop-color="#8a96a5"/><stop offset=".78" stop-color="#99a6b7"/><stop offset="1" stop-color="#8b97a6"/></linearGradient>
        <linearGradient id="side" gradientUnits="userSpaceOnUse" x1="795" y1="770" x2="805" y2="808"><stop offset="0" stop-color="#929eae"/><stop offset=".45" stop-color="#7b8693"/><stop offset="1" stop-color="#575d67"/></linearGradient>
        <clipPath id="big"><ellipse cx="1052" cy="612.500" rx="90" ry="95.500"/></clipPath>
      </defs>
      <g transform="translate(-541 -152)">
        <path d="M773 440L781 783Q784 808 805 812L1068 814L1240 814L1274 805L1250 790L900 422z" fill="url(#side)"/>
        <path d="M807 440Q812 420 840 421L1180 422L1263 423Q1287 427 1288 452L1297 778Q1296 800 1272 805L845 803Q818 797 815 767z" fill="#909caa"/>
        <ellipse cx="1052" cy="612.500" rx="90" ry="95.500" fill="url(#bore)"/>
        <ellipse cx="1017" cy="624" rx="91" ry="97" fill="#e9eaee" clip-path="url(#big)"/>
        ${[[0, 0], [-386, -3], [-379, 278], [7, 280]].map(([x, y], i) => this.bolt(x, y, i))}
        <path d="M1011 617.500h23" stroke="#2cff2c"/><path d="M1034 617.500l9-2.500" stroke="#ff2c2c" stroke-width="1.300"/><path d="M1034.500 618v10l1 15" stroke="#2cffff" fill="none"/>
        <circle cx="1010.500" cy="617.500" r="2.500" fill="#2cff2c"/><circle cx="1043" cy="615.500" r="3" fill="#ff2c2c"/><circle cx="1035.500" cy="643" r="2.200" fill="#2cffff"/>
      </g></svg>
      <div class="bar" role="toolbar">${VIEW_TOOLS.map(([a, l]) => html`<button aria-label=${l} class=${a === "vSpin" ? "on" : ""}>${icon(a)}</button>`)}</div>`;
  }
}

@customElement("status-bar")
class StatusBar extends LitElement {
  static styles = [base, css`
    :host { display: flex; align-items: center; height: 31px; padding: 0 11px 0 6px; background: #f5f9fa; border-top: 1px solid #b1c1bf; color: #444; }
    .left, .find { display: flex; align-items: center; }
    .left { gap: 8px; flex: 1; }
    .left button { display: grid; place-items: center; width: 18px; height: 24px; }
    .left .on { width: 22px; background: #dde0e2; border: 1px solid #a9adaf; }
    .rule { width: 1px; height: 24px; background: #a9b0b1; }
    .msg { display: flex; align-items: center; gap: 4px; margin: 0; font-size: 11px; line-height: 20px; }
    .dot { width: 5px; height: 5px; border-radius: 50%; background: #1a6184; }
    .find { gap: 3px; }
    .find div { display: flex; height: 24px; border: 1px solid #bfc3c4; }
    .find button { display: grid; place-items: center; width: 26px; }
    .find button + button { width: 14px; border-left: 1px solid #bfc3c4; }
    .rules { width: 6px; height: 26px; border: solid #b5baba; border-width: 0 1px; }
    .pick { position: relative; margin-left: 75px; width: 142px; height: 21px; border: 1px solid #a9adaf; background: #f8f9fb; }
    select { appearance: none; width: 100%; height: 19px; padding: 0 8px; border: 0; background: none; font: inherit; color: inherit; }
    .pick svg { position: absolute; right: 3px; top: 6px; }
    .pick::after { content: ""; position: absolute; right: 14px; top: 0; width: 1px; height: 19px; background: #a9adaf; }
  `];
  render() {
    return html`<div class="left"><button class="on" aria-label="导航器">${icon("navPane")}</button><button aria-label="浏览器">${icon("globe")}</button>
        <button aria-label="全屏">${icon("square")}</button><span class="rule"></span>
        <p class="msg"><span class="dot"></span><span>${mixed("PRT0001 已保存。")}</span></p></div>
      <div class="find"><span class="rules"></span><div><button aria-label="查找">${icon("bino")}</button><button aria-label="查找菜单">${icon("down")}</button></div><span class="rule"></span></div>
      <div class="pick"><select aria-label="选择过滤器"><option>几何</option></select>${icon("down")}</div>`;
  }
}

@customElement("rename-dialog")
class RenameDialog extends LitElement {
  @property({ type: Boolean }) silent = false;
  static styles = [base, css`
    :host { display: block; width: 348px; background: #eee; border: 1px solid #9b9b9b; box-shadow: 2px 3px 10px rgba(0, 0, 0, .45); color: #333; }
    header { display: flex; align-items: center; justify-content: space-between; height: 25px; padding: 0 9px 2px 3px; background: #fff; color: #999; }
    .body { display: grid; grid-template-columns: 57px 1fr; padding: 8px 0 0; }
    .body svg { margin: 1px 0 0 10px; }
    p { margin: 0; line-height: 21px; white-space: nowrap; }
    .ask { margin-top: 17px; }
    .acts { display: flex; align-items: center; gap: 6px; padding: 8px 0 12px 72px; }
    label { display: flex; align-items: center; gap: 4px; margin-right: 13px; line-height: 16px; }
    input { appearance: none; width: 13px; height: 13px; margin: 0; border: 1px solid #7a8a99; background: linear-gradient(#fff, #c0d3e5); }
    .acts button { width: 58px; height: 28px; border: 1px solid #7a8a99; background: linear-gradient(#dde8f3, #fff 30%, #dde8f3 50%, #b8cfe5); }
    .acts .ok { border-width: 2px; }
  `];
  render() {
    return html`<header>提示<button aria-label="关闭">${icon("close")}</button></header>
      <div class="body">${icon("warn")}<div>
        <p>对单零件或组件进行重名时，需要先打开其父装配体;</p><p>待零件或装配体重名后对其父装配体进行保存，</p><p>否则打开其父装配体时会检索不到此零件。</p>
        <p class="ask">确定是否继续？</p></div></div>
      <div class="acts"><label><input type="checkbox" .checked=${this.silent}>不再显示</label><button class="ok">确定</button><button>取消</button></div>`;
  }
}

@customElement("app-root")
class AppRoot extends LitElement {
  static styles = [base, css`
    :host { display: flex; flex-direction: column; position: relative; height: 100vh; overflow: hidden; font: 12px/16px "Noto Sans CJK SC", sans-serif; }
    main { display: flex; flex: 1; min-height: 0; }
    rename-dialog { position: absolute; left: 686px; top: 284px; }
    .marks { position: absolute; inset: 0; width: 100%; height: 100%; pointer-events: none; }
    .brand { position: absolute; right: 21px; bottom: 8px; pointer-events: none; }
    .name { margin: 0; font: italic 300 41px/42px "Noto Sans CJK SC", sans-serif; color: #000; }
    .name span { color: #ff6633; }
    .url { margin: 0; font: italic 15px/20px "DejaVu Sans", sans-serif; color: #8f8f8f; }
    .flame { position: absolute; left: 65px; top: -15px; }
  `];
  render() {
    return html`<title-bar></title-bar><tab-strip></tab-strip><ribbon-bar></ribbon-bar>
      <main><model-tree></model-tree><model-view></model-view></main>
      <status-bar></status-bar>
      <rename-dialog></rename-dialog>
      <svg class="marks" fill="none" stroke-width="5">
        <ellipse cx="184" cy="104.500" rx="24.500" ry="38" stroke="#ff7f27"/><ellipse cx="125" cy="169.500" rx="31" ry="34" stroke="#99d9ea"/>
        <ellipse cx="873.500" cy="439.500" rx="36.500" ry="30" stroke="#ff7f27"/><ellipse cx="800.500" cy="488" rx="45" ry="35" stroke="#99d9ea"/>
        <g font-family="Open Sans" font-size="30" stroke="none"><text x="112" y="182" fill="#ff7f27">1</text><text x="789" y="501" fill="#99d9ea">2</text></g>
      </svg>
      <div class="brand"><p class="name"><span>野火</span>论坛</p><p class="url">www.proewildfire.cn</p>
        <svg class="flame" width="20" height="44" viewBox="0 0 20 44"><path d="M5 0Q18 10 18 24Q17 34 8 43L3 38Q11 34 12 24Q13 11 5 0zM2 9Q10 15 10 24Q10 30 5 35Q8 20 2 9z" fill="#ff6633"/></svg></div>`;
  }
}
